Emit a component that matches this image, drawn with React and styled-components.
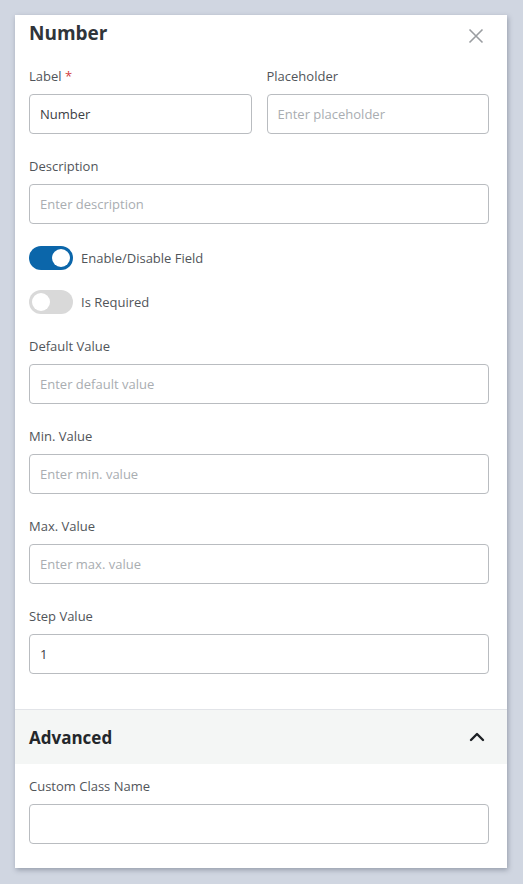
import React, { useState } from 'react';
import styled, { createGlobalStyle } from 'styled-components';

const GlobalStyle = createGlobalStyle`
  html, body {
    margin: 0;
    padding: 0;
    background: #d0d6e1;
    font-family: 'Open Sans', 'Noto Sans', sans-serif;
  }
  * { box-sizing: border-box; }
`;

const Page = styled.div`
  padding: 15px 16px 16px 15px;
`;

const Card = styled.div`
  background: #fff;
  box-shadow: 1px 2px 5px rgba(40, 50, 70, 0.35);
`;

const Body = styled.div`
  padding: 5px 18px 35px 14px;
  display: flex;
  flex-direction: column;
  gap: 22px;
`;

const Header = styled.div`
  display: flex;
  align-items: center;
  justify-content: space-between;
  height: 26px;
  margin-bottom: -2px;
`;

const Title = styled.h2`
  margin: 0;
  font-size: 19px;
  line-height: 26px;
  font-weight: 700;
  color: #30353a;
`;

const CloseButton = styled.button`
  border: none;
  background: none;
  padding: 0;
  margin-right: 5px;
  margin-top: 6px;
  cursor: pointer;
  display: flex;
`;

const Row = styled.div`
  display: grid;
  grid-template-columns: 1fr 1fr;
  gap: 15px;
`;

const Field = styled.div`
  display: flex;
  flex-direction: column;
`;

const Label = styled.label`
  font-size: 13px;
  line-height: 20px;
  color: #51555a;
  margin-bottom: 8px;
`;

const Star = styled.span`
  color: #d23c3c;
`;

const Input = styled.input`
  height: 40px;
  border: 1px solid #b9bcc0;
  border-radius: 4px;
  padding: 0 10px;
  font-family: inherit;
  font-size: 13px;
  color: #3c4045;
  outline: none;
  width: 100%;

  &::placeholder {
    color: #a9adb1;
  }
`;

const Toggles = styled.div`
  display: flex;
  flex-direction: column;
  gap: 20px;
`;

const ToggleRow = styled.label`
  display: flex;
  align-items: center;
  gap: 8px;
  height: 24px;
  font-size: 13px;
  line-height: 20px;
  color: #51555a;
  cursor: pointer;
`;

const Track = styled.span`
  position: relative;
  width: 44px;
  height: 24px;
  border-radius: 12px;
  background: ${p => (p.$on ? '#0b66aa' : '#d9d9d9')};
`;

const Knob = styled.span`
  position: absolute;
  top: 3px;
  left: ${p => (p.$on ? '23px' : '3px')};
  width: 18px;
  height: 18px;
  border-radius: 50%;
  background: #fff;
`;

const Section = styled.div`
  border-top: 1px solid #e2e4e8;
`;

const SectionHeader = styled.div`
  display: flex;
  align-items: center;
  justify-content: space-between;
  height: 54px;
  padding: 0 22px 0 14px;
  background: #f4f6f5;
`;

const SectionTitle = styled.h3`
  margin: 0;
  font-size: 17px;
  font-weight: 700;
  color: #23272b;
`;

const SectionBody = styled.div`
  padding: 12px 18px 24px 14px;
`;

function Toggle({ on, label, onClick }) {
  return (
    <ToggleRow onClick={onClick}>
      <Track $on={on}>
        <Knob $on={on} />
      </Track>
      {label}
    </ToggleRow>
  );
}

export default function App() {
  const [enabled, setEnabled] = useState(true);
  const [required, setRequired] = useState(false);

  return (
    <Page>
      <GlobalStyle />
      <Card>
        <Body>
          <Header>
            <Title>Number</Title>
            <CloseButton aria-label="Close">
              <svg width="16" height="16" viewBox="0 0 16 16" fill="none" stroke="#9a9da1" strokeWidth="1.6">
                <path d="M1.5 1.5l13 13M14.5 1.5l-13 13" />
              </svg>
            </CloseButton>
          </Header>
          <Row>
            <Field>
              <Label>Label <Star>*</Star></Label>
              <Input defaultValue="Number" />
            </Field>
            <Field>
              <Label>Placeholder</Label>
              <Input placeholder="Enter placeholder" />
            </Field>
          </Row>
          <Field>
            <Label>Description</Label>
            <Input placeholder="Enter description" />
          </Field>
          <Toggles>
            <Toggle on={enabled} label="Enable/Disable Field" onClick={() => setEnabled(!enabled)} />
            <Toggle on={required} label="Is Required" onClick={() => setRequired(!required)} />
          </Toggles>
          <Field>
            <Label>Default Value</Label>
            <Input placeholder="Enter default value" />
          </Field>
          <Field>
            <Label>Min. Value</Label>
            <Input placeholder="Enter min. value" />
          </Field>
          <Field>
            <Label>Max. Value</Label>
            <Input placeholder="Enter max. value" />
          </Field>
          <Field>
            <Label>Step Value</Label>
            <Input defaultValue="1" />
          </Field>
        </Body>
        <Section>
          <SectionHeader>
            <SectionTitle>Advanced</SectionTitle>
            <svg width="16" height="10" viewBox="0 0 16 10" fill="none" stroke="#1d2125" strokeWidth="2.4" strokeLinecap="round" strokeLinejoin="round">
              <path d="M2 8l6-6 6 6" />
            </svg>
          </SectionHeader>
          <SectionBody>
            <Field>
              <Label>Custom Class Name</Label>
              <Input />
            </Field>
          </SectionBody>
        </Section>
      </Card>
    </Page>
  );
}
